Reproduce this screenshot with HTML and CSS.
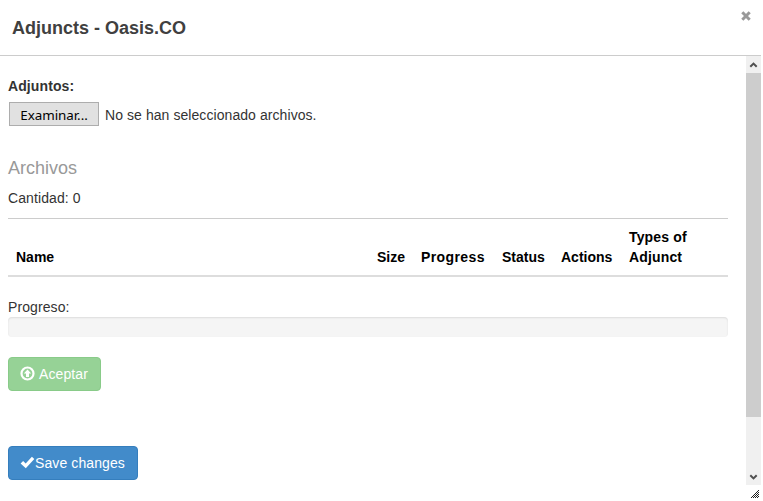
FILE: index.html
```html
<!DOCTYPE html>
<html lang="es">
<head>
<meta charset="utf-8">
<title>Adjuncts - Oasis.CO</title>
<link rel="stylesheet" href="styles.css">
</head>
<body>
<div class="dialog">
  <header class="dialog-header">
    <h1 class="dialog-title"><span>Adjuncts - Oasis.CO</span></h1>
    <svg class="close" viewBox="0 0 10 10"><path d="M1.3 1.3 8.7 8.7M8.7 1.3 1.3 8.7"/></svg>
  </header>
  <div class="dialog-main">
    <main class="content">
      <label class="field-label">Adjuntos:</label>
      <div class="file-row">
        <button class="browse"><span>Examinar...</span></button>
        <span class="file-status">No se han seleccionado archivos.</span>
      </div>
      <h2 class="section-title">Archivos</h2>
      <p class="count">Cantidad: 0</p>
      <div class="table-head">
        <span>Name</span><span>Size</span><span class="wide">Progress</span><span>Status</span><span>Actions</span><span class="types">Types of<br>Adjunct</span>
      </div>
      <div class="progress-label">Progreso:</div>
      <div class="progress"></div>
      <button class="btn accept">
        <svg width="15" height="15" viewBox="0 0 15 15"><circle cx="7.5" cy="7.5" r="6" fill="none" stroke="#fff" stroke-width="2.2"/><path fill="#fff" d="M7.5 3.4 11.2 7.6H9V11H6V7.6H3.8z"/></svg>
        <span>Aceptar</span>
      </button>
      <button class="btn save">
        <svg width="15" height="13" viewBox="0 0 15 13"><path fill="#fff" d="M.6 7.5 3.1 5 5.7 7.4 11.9.8 14.3 3 5.8 12.3z"/></svg>
        <span>Save changes</span>
      </button>
    </main>
    <div class="scrollbar">
      <svg class="arrow" viewBox="0 0 15 17"><path d="M4.3 10.8 7.5 7.6 10.7 10.8"/></svg>
      <div class="thumb"></div>
      <svg class="arrow" viewBox="0 0 15 17"><path d="M4.3 7.2 7.5 10.4 10.7 7.2"/></svg>
    </div>
  </div>
  <svg class="grip" width="8" height="8" viewBox="0 0 8 8" shape-rendering="crispEdges"><path fill="#222" d="M7 0h1v1h-1zM6 1h1v1h-1zM5 2h1v1h-1zM7 2h1v1h-1zM4 3h1v1h-1zM6 3h1v1h-1zM3 4h1v1h-1zM5 4h1v1h-1zM7 4h1v1h-1zM2 5h1v1h-1zM4 5h1v1h-1zM6 5h1v1h-1zM1 6h1v1h-1zM3 6h1v1h-1zM5 6h1v1h-1zM7 6h1v1h-1zM0 7h1v1h-1zM2 7h1v1h-1zM4 7h1v1h-1zM6 7h1v1h-1z"/></svg>
</div>
</body>
</html>
```
FILE: styles.css
```css
* { box-sizing: border-box; }
body {
  margin: 0;
  background: #fff;
  color: #333;
  font: 14px/20px "Liberation Sans", Arial, sans-serif;
  overflow: hidden;
}
button { font: inherit; cursor: pointer; }
.dialog { width: 761px; height: 501px; display: flex; flex-direction: column; }
.dialog-header {
  height: 56px;
  flex: none;
  display: flex;
  justify-content: space-between;
  padding: 0 10px 0 12px;
  border-bottom: 1px solid #ccc;
}
.dialog-title { margin: 16px 0 0; font-size: 18px; line-height: 25px; color: #404040; }
.close { width: 10px; height: 10px; margin-top: 11px; fill: none; stroke: #999; stroke-width: 3; }
.dialog-main { height: 429px; flex: none; display: flex; }
.content { flex: 1; padding: 20px 18px 0 8px; display: flex; flex-direction: column; }
.field-label { font-weight: bold; letter-spacing: 0.1px; }
.file-row { display: flex; align-items: center; gap: 6px; height: 24px; margin: 6px 0 0 1px; }
.file-status { letter-spacing: 0.07px; margin-top: 1px; }
.browse {
  width: 90px;
  height: 24px;
  padding: 2px 0 0;
  border: 1px solid #adadad;
  background: #e1e1e1;
  color: #000;
  font: 13.4px/20px "Noto Sans", sans-serif;
  letter-spacing: -0.05px;
}
.section-title { margin: 32px 0 0; font-size: 18px; line-height: 20px; font-weight: normal; color: #999; }
.count { margin: 10px 0; letter-spacing: 0.1px; }
.table-head {
  height: 59px;
  display: grid;
  grid-template-columns: 361px 44px 81px 59px 68px 107px;
  align-items: end;
  padding: 0 0 8px;
  border-top: 1px solid #ccc;
  border-bottom: 2px solid #ddd;
  color: #000;
  font-weight: bold;
}
.table-head span { padding-left: 8px; }
.table-head .wide { letter-spacing: 0.4px; }
.table-head .types { letter-spacing: 0.15px; }
.progress-label { margin-top: 20px; letter-spacing: 0.1px; }
.progress { height: 20px; border-radius: 4px; background: #f5f5f5; box-shadow: inset 0 1px 2px rgba(0,0,0,.1); }
.btn {
  height: 34px;
  display: flex;
  align-items: center;
  padding: 0 11px;
  border-radius: 4px;
  color: #fff;
  text-align: left;
  white-space: nowrap;
}
.accept { width: 93px; margin-top: 20px; gap: 4px; background: #96d296; border: 1px solid #89cb89; }
.accept svg { margin-top: -2px; }
.accept span { letter-spacing: 0.1px; }
.save { width: 130px; margin-top: 55px; background: #428bca; border: 1px solid #357ebd; }
.save span { letter-spacing: 0.1px; }
.btn svg { flex: none; }
.save svg { margin-top: -1px; }
.scrollbar { width: 15px; background: #f0f0f0; display: flex; flex-direction: column; justify-content: space-between; }
.arrow { width: 15px; height: 17px; flex: none; fill: none; stroke: #505050; stroke-width: 2; }
.thumb { height: 344px; margin-bottom: auto; background: #cdcdcd; }
.grip { align-self: flex-end; margin: 5px 2px 0 0; }
```
